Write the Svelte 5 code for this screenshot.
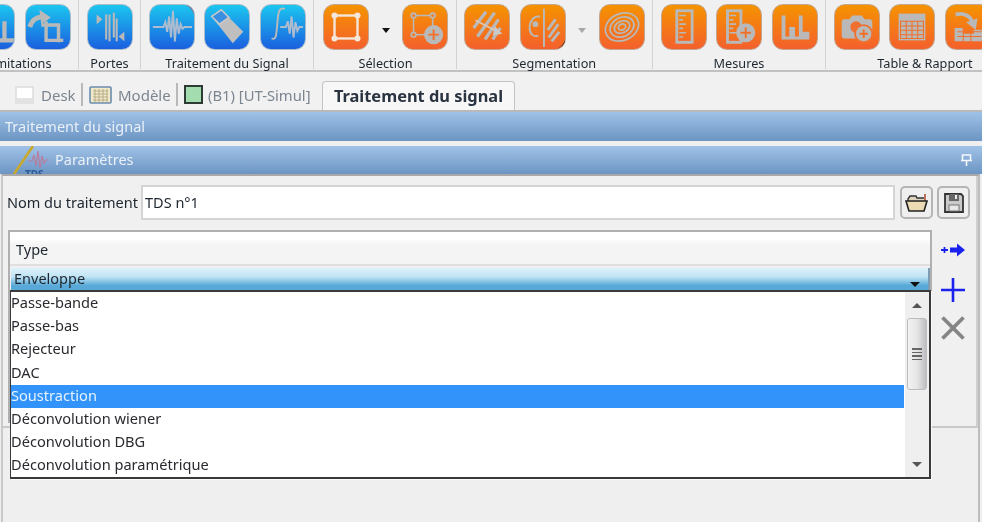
<script>
  const groups = [
    { label: 'Délimitations', cls: 'g-first', items: [['blue', 'limit'], ['blue', 'crop']] },
    { label: 'Portes', items: [['blue', 'gates']] },
    { label: 'Traitement du Signal', items: [['blue', 'wave', 'red'], ['blue', 'eraser'], ['blue', 'integral']] },
    { label: 'Sélection', cls: 'g-sel', items: [['orange', 'rect'], ['arrow', 'black'], ['orange', 'rectadd']] },
    { label: 'Segmentation', items: [['orange', 'hatch'], ['orange', 'split', 'black'], ['arrow', 'grey'], ['orange', 'rings']] },
    { label: 'Mesures', items: [['orange', 'ruler'], ['orange', 'ruleradd'], ['orange', 'bars']] },
    { label: 'Table & Rapport', cls: 'g-last', items: [['orange', 'camera'], ['orange', 'table'], ['orange', 'export']] }
  ];
  const options = ['Passe-bande', 'Passe-bas', 'Rejecteur', 'DAC', 'Soustraction', 'Déconvolution wiener', 'Déconvolution DBG', 'Déconvolution paramétrique'];
</script>

{#snippet plus(x, y, r)}
  <circle cx={x} cy={y} r={r} fill="#b9b9b9" stroke="none" />
  <path d="M{x - r * 0.55} {y}H{x + r * 0.55}M{x} {y - r * 0.55}V{y + r * 0.55}" stroke="#f0702a" stroke-width="2" />
{/snippet}

{#snippet glyph(name)}
  <svg class="glyph" viewBox="0 0 46 46" fill="none" stroke="#b9b9b9" stroke-width="2.5">
    {#if name === 'limit'}
      <path d="M36 17V37M18 37H46" stroke-width="4.5" />
    {:else if name === 'crop'}
      <path d="M16 21H34V39M21 17V37H39" stroke-width="3.6" />
      <path d="M4 23C6 16 11 12.5 18 12.5" stroke-width="5" /><path d="M14 5L26 13L16 20Z" fill="#b9b9b9" stroke="none" />
    {:else if name === 'gates'}
      <path d="M9 10L15 15L9 20Z M38 28L32 33L38 38Z" fill="#b9b9b9" stroke="none" />
      <path d="M19 10V36M22.5 10V38M27 8V34M30 14V38" stroke-width="2.2" />
    {:else if name === 'wave'}
      <path d="M3 23H14L16 18L18 28L20 12L22 34L24 6L26 38L28 14L30 30L32 20L34 25L36 23H44" stroke="#aebccf" stroke-width="2" />
    {:else if name === 'eraser'}
      <path d="M7 12L17 5L40 28L29 40Z" fill="#bfbfbf" stroke="none" />
      <path d="M7 12L17 5L25 13L15 20Z" fill="#3a8fe0" stroke="#c9c9c9" stroke-width="1.6" />
    {:else if name === 'integral'}
      <path d="M25 4C18 2 18 9 17 20C16 31 16 37 11 35" stroke-width="2" />
      <path d="M20 23H26L28 17L30 30L32 12L34 34L36 18L38 27L40 23H44" stroke="#aebccf" stroke-width="2" />
    {:else if name === 'rect'}
      <rect x="11" y="11" width="24" height="24" stroke="#f4e6da" stroke-width="2.5" />
      <g fill="#f4e6da" stroke="none"><circle cx="11" cy="11" r="3.2" /><circle cx="35" cy="11" r="3.2" /><circle cx="11" cy="35" r="3.2" /><circle cx="35" cy="35" r="3.2" /></g>
    {:else if name === 'rectadd'}
      <rect x="11" y="11" width="20" height="20" stroke-width="1.6" />
      <g fill="#f08030" stroke-width="1.6"><circle cx="11" cy="11" r="2.5" /><circle cx="31" cy="11" r="2.5" /><circle cx="11" cy="31" r="2.5" /></g>
      {@render plus(32, 31, 10)}
    {:else if name === 'hatch'}
      <path d="M9 24L22 7M13 33L31 8M21 36L35 15M29 36L37 24" stroke-width="3.4" /><path d="M11 16L34 28" stroke="#dcc6b6" stroke-width="1.8" /><path d="M31 22L39 30L29 32Z" fill="#c9c9c9" stroke="none" />
    {:else if name === 'split'}
      <path d="M20 12C13 11 9 17 9 24C9 30 13 34 18 32" stroke-width="2" /><circle cx="15" cy="20" r="1.8" fill="#b9b9b9" /><path d="M24 4V44" stroke-width="2" />
      <path d="M28 26L36 15M29 34L39 20M32 38L40 28" stroke-width="3" />
    {:else if name === 'rings'}
      <g stroke-width="1.8"><ellipse cx="23" cy="23" rx="18" ry="14" transform="rotate(-25 23 23)" /><ellipse cx="23" cy="23" rx="13" ry="10" transform="rotate(-25 23 23)" /><ellipse cx="23" cy="23" rx="8.5" ry="6" transform="rotate(-25 23 23)" /><ellipse cx="23" cy="23" rx="4" ry="3" transform="rotate(-25 23 23)" /></g>
    {:else if name === 'ruler'}
      <rect x="15.5" y="6" width="16" height="33" stroke-width="3" />
      <path d="M18 11H25M18 15.5H22M18 20H25M18 24.5H22M18 29H25M18 33.5H22" stroke-width="1.7" />
    {:else if name === 'ruleradd'}
      <rect x="11" y="6" width="14" height="33" stroke-width="3" />
      <path d="M13 11H20M13 15.5H17M13 20H20M13 24.5H17M13 29H20" stroke-width="1.7" />
      {@render plus(30, 29, 10)}
    {:else if name === 'bars'}
      <path d="M9 11H13V36H9ZM17 23H23V36H17ZM27 11H31V36H27ZM31 28H38V36H31ZM9 33H38V36H9Z" fill="#b9b9b9" stroke="none" />
    {:else if name === 'camera'}
      <path d="M10 15H15L18 11H28L31 15H36Q39 15 39 18V32Q39 35 36 35H10Q7 35 7 32V18Q7 15 10 15Z" fill="#b9b9b9" stroke="none" />
      <circle cx="22" cy="23" r="6" fill="#f07030" stroke="none" />
      <circle cx="30" cy="30" r="10" fill="#f07030" stroke="none" />{@render plus(30, 30, 8)}
    {:else if name === 'table'}
      <rect x="9" y="9" width="28" height="28" fill="#b9b9b9" stroke="none" />
      <path d="M11 17H35V35H11ZM11 22H35M11 26.5H35M11 31H35M17 17V35M23 17V35M29 17V35" stroke="#f0702a" stroke-width="1.1" />
    {:else if name === 'export'}
      <path d="M9 24V38H40V26H29V30H18V24Z" fill="#b9b9b9" stroke="none" />
      <path d="M12 28H37M12 33H37M18 24V38M26 24V38" stroke="#f0702a" stroke-width="1.1" />
      <path d="M10 10C18 8 25 11 27 17" stroke-width="4" /><path d="M21 18L33 14L31 26Z" fill="#b9b9b9" stroke="none" />
    {/if}
  </svg>
{/snippet}

<div class="app">
  <header class="ribbon">
    {#each groups as g}
      <section class="group {g.cls ?? ''}">
        <div class="icons">
          {#each g.items as it}
            {#if it[0] === 'arrow'}
              <span class="drop {it[1]}"></span>
            {:else}
              <span class="btn {it[0]}">
                {@render glyph(it[1])}
                {#if it[2]}<span class="corner {it[2]}"></span>{/if}
              </span>
            {/if}
          {/each}
        </div>
        <div class="glabel">{g.label}</div>
      </section>
    {/each}
  </header>

  <nav class="tabs">
    <span class="tab t-desk">
      <svg width="19" height="18" viewBox="0 0 19 18"><rect x="1" y="1" width="17" height="12" fill="#fff" stroke="#dcdcdc" stroke-width="1.5" /><rect x="0" y="13" width="19" height="5" fill="#e2e2e2" /></svg>
      Desk
    </span>
    <span class="tab t-model">
      <svg width="23" height="18" viewBox="0 0 23 18"><rect x="1" y="1" width="21" height="16" rx="1" fill="#f2e9c8" stroke="#6a8cae" stroke-width="1.6" /><path d="M4 5H19M4 8H19M4 11H19M4 14H19M6 3V16M10 3V16M14 3V16M18 3V16" stroke="#a9a27e" stroke-width=".8" /></svg>
      Modèle
    </span>
    <span class="tab t-sim">
      <span class="swatch"></span>
      (B1) [UT-Simul]
    </span>
    <span class="active">Traitement du signal</span>
  </nav>

  <div class="bar title">Traitement du signal</div>

  <div class="bar param">
    <svg class="logo" width="36" height="28" viewBox="0 0 36 28">
      <path d="M20 0L1 28" stroke="#c9a92c" stroke-width="2.6" />
      <path d="M15 15H19L21 9L23 20L25 5L27 22L29 10L31 17L33 14H36" stroke="#b77d9f" stroke-width="1.2" fill="none" />
      <text x="12" y="32" class="tds">TDS</text>
    </svg>
    <span>Paramètres</span>
    <svg class="pin" width="11" height="12" viewBox="0 0 11 12"><path d="M1.5 1H9.5V6.5H1.5ZM0 6.5H11M5.5 7V12" stroke="#f4f7fb" stroke-width="1.6" fill="none" /></svg>
  </div>

  <main class="outer">
    <div class="form">
      <div class="name-row">
        <label class="nlabel" for="nom">Nom du traitement</label>
        <input id="nom" class="ninput" value="TDS n°1" />
        <button class="tool" aria-label="Ouvrir">
          <svg width="24" height="20" viewBox="0 0 24 20"><path d="M3 6L5 3H11L12 5H20V9H3Z" fill="#ddd2bd" stroke="#333" stroke-width="1.4" /><path d="M19 1L21 1V8H19Z" fill="#c0705a" /><path d="M1 8H22L19 18H4Z" fill="#ecdab4" stroke="#222" stroke-width="1.6" /></svg>
        </button>
        <button class="tool" aria-label="Enregistrer">
          <svg width="20" height="22" viewBox="0 0 20 22"><path d="M1 2H17L19 4V20H1Z" fill="#c9c9c9" stroke="#333" stroke-width="1.8" /><rect x="5" y="2" width="10" height="7" fill="#666" /><rect x="11" y="3" width="2" height="4" fill="#eee" /><rect x="5" y="13" width="10" height="6" fill="#e8e8e8" stroke="#777" /></svg>
        </button>
      </div>

      <div class="work">
        <div class="grid">
          <div class="ghead">Type</div>
          <div class="gsel">
            <span>Enveloppe</span>
            <i class="caret"></i>
          </div>
          <div class="list">
            <ul>
              {#each options as o}
                <li class:sel={o === 'Soustraction'}>{o}</li>
              {/each}
            </ul>
            <div class="scroll">
              <div class="sbtn"><i class="up"></i></div>
              <div class="thumb"><b></b><b></b><b></b><b></b></div>
              <div class="sfill"></div>
              <div class="sbtn down"><i class="dn"></i></div>
            </div>
          </div>
        </div>
        <div class="actions">
          <svg class="a-next" width="24" height="14" viewBox="0 0 24 14"><path d="M0 7H7M3.5 4V10" stroke="#1a22ee" stroke-width="1.8" /><path d="M9 4.5H16V0.5L24 7L16 13.5V9.5H9Z" fill="#1a22ee" /></svg>
          <svg class="a-add" width="24" height="24" viewBox="0 0 24 24"><path d="M0 12H24M12 0V24" stroke="#1a22ee" stroke-width="2.6" /></svg>
          <svg class="a-del" width="24" height="24" viewBox="0 0 24 24"><path d="M1.5 1.5L22.5 22.5M22.5 1.5L1.5 22.5" stroke="#858585" stroke-width="3.8" /></svg>
        </div>
      </div>
    </div>
  </main>
</div>

<style>
  :global(body) { margin: 0; background: #efefef; }
  .app {
    width: 982px; height: 522px; overflow: hidden; background: #efefef;
    display: flex; flex-direction: column;
    font-family: "Noto Sans", "Open Sans", sans-serif; color: #1e2630;
    filter: blur(0.35px);
  }

  .ribbon { display: flex; height: 70px; flex: none; background: #f0f0f0; border-bottom: 2px solid #c2c2c2; }
  .group { flex: none; box-sizing: border-box; height: 69px; padding: 4px 7.5px 0; border-right: 1px solid #d2d2d2; display: flex; flex-direction: column; align-items: center; }
  .g-first { margin-left: -38.5px; }
  .g-sel { padding-left: 9px; }
  .g-last { border-right: 0; }
  .icons { display: flex; gap: 9.5px; align-items: flex-start; height: 46px; }
  .glabel { font-size: 12.7px; line-height: 17px; margin-top: 5px; white-space: nowrap; }
  .g-first .glabel { align-self: flex-end; margin-right: 19px; }
  .g-last .glabel { margin-left: 26px; }
  .btn { position: relative; display: block; flex: none; width: 46px; height: 46px; border-radius: 11px; overflow: hidden; box-sizing: border-box; border: 1px solid #b9b3ab; }
  .blue { background: linear-gradient(#1bc6ef, #1b5fdf); border-color: #a9bccb; }
  .orange { background: linear-gradient(#f59300, #f4602d); border-color: #c4a68f; }
  .glyph { display: block; width: 44px; height: 44px; }
  .corner { position: absolute; right: -1px; top: -1px; width: 14px; height: 14px; background: #e5202e; clip-path: path("M0 0H14V14A14 14 0 0 0 0 0Z"); }
  .corner.black { top: auto; bottom: -1px; background: #111; clip-path: path("M14 0V14H0A14 14 0 0 0 14 0Z"); }
  .drop { flex: none; width: 14px; height: 30px; position: relative; }
  .drop::after { content: ""; position: absolute; left: 3px; top: 24px; border: 4px solid transparent; border-top: 5px solid #111; border-bottom: 0; }
  .drop.grey::after { border-top-color: #a8a8a8; }

  .tabs { height: 38px; flex: none; display: flex; align-items: flex-end; box-sizing: content-box; border-bottom: 2px solid #b9b9b9; background: #f1f1f1; font-size: 15px; color: #7b8590; }
  .tab { display: flex; align-items: center; height: 23px; margin-bottom: 4px; gap: 7px; box-sizing: border-box; white-space: nowrap; }
  .t-desk { padding-left: 15px; width: 83px; border-right: 2px solid #b8b8b8; }
  .t-model { padding-left: 6px; width: 95px; gap: 6px; border-right: 2px solid #b8b8b8; }
  .t-sim { padding-left: 6px; width: 144px; gap: 5px; font-size: 14.8px; }
  .swatch { width: 15px; height: 15px; background: #a3dcae; border: 2px solid #2e3a34; }
  .active { height: 29px; box-sizing: border-box; width: 193px; padding-bottom: 2px; display: flex; align-items: center; justify-content: center; background: #f7f7f7; border: 1px solid #c3c3c3; border-bottom: 0; border-radius: 4px 4px 0 0; font-weight: 700; font-size: 16.4px; color: #2a3340; white-space: nowrap; }

  .bar { flex: none; box-sizing: border-box; background: linear-gradient(#a0c2e7, #6c95c3); color: #e9f0f8; font-size: 14.5px; display: flex; align-items: center; padding-bottom: 2px; }
  .title { height: 29px; padding-left: 5px; }
  .param { height: 28px; margin-top: 5px; padding-left: 13px; padding-bottom: 0; gap: 6px; position: relative; overflow: hidden; }
  .param span { margin-bottom: 2px; }
  .logo { flex: none; }
  .tds { font-size: 10px; font-weight: 700; fill: #2d5a98; font-family: "Noto Sans", sans-serif; }
  .pin { margin-left: auto; margin-right: 10px; }

  .outer { flex: 1; box-sizing: border-box; margin-left: 1px; margin-right: 2px; border-left: 2px solid #c9c9c9; border-right: 2px solid #bdbdbd; border-top: 2px solid #a9a9a9; }
  .form { height: 252px; box-sizing: border-box; border-bottom: 2px solid #c9c9c9; border-right: 2px solid #cfcfcf; padding: 9px 0 0 4px; background: #f0f0f0; }

  .name-row { display: flex; align-items: center; height: 35px; font-size: 14.5px; }
  .nlabel { width: 134px; flex: none; margin-bottom: 2px; }
  .ninput { width: 754px; height: 35px; box-sizing: border-box; flex: none; border: 2px solid #d4d4d4; background: #fff; font: inherit; color: inherit; padding: 0 2px 2px; outline: 0; }
  .tool { flex: none; width: 33px; height: 33px; margin-left: 5px; padding: 0; border: 2px solid #b5b5b5; border-radius: 5px; background: #efefef; display: flex; align-items: center; justify-content: center; }
  .tool + .tool { margin-left: 4px; }

  .work { display: flex; margin-top: 10px; }
  .grid { position: relative; flex: none; width: 924px; height: 193px; margin-left: 1px; box-sizing: border-box; border: 2px solid #b0b0b0; border-bottom: 0; background: #f0f0f0; }
  .ghead { height: 34px; box-sizing: border-box; padding: 7px 0 0 6px; font-size: 14.5px; line-height: 20px; background: linear-gradient(#fff 20%, #f4f4f4 40%); border-bottom: 2px solid #e0e0e0; }
  .gsel { height: 22px; margin: 2px 0 0 1px; padding: 0 0 2px 3px; box-sizing: border-box; display: flex; align-items: center; justify-content: space-between; font-size: 14.5px; background: linear-gradient(#dff2fb, #bfe3f3 40%, #58a9d8 80%); border-right: 2px solid #7e9db4; }
  .caret { margin-right: 8px; margin-top: 12px; border: 5px solid transparent; border-top: 5px solid #111; border-bottom: 0; }

  .list { position: absolute; left: 0; top: 58px; width: 921px; height: 189px; box-sizing: border-box; display: flex; background: #fff; border: 2px solid #3a3a3a; border-left-width: 1.5px; box-shadow: 1px 1px 0 #fafafa; }
  ul { list-style: none; margin: 0; padding: 0; flex: 1; }
  li { height: 23.2px; line-height: 20px; font-size: 14.6px; white-space: nowrap; color: #2a2a30; }
  li.sel { background: #3294fb; color: #e6f2ff; }
  .scroll { width: 24px; flex: none; display: flex; flex-direction: column; background: #efefef; margin-left: 1px; }
  .sbtn { height: 26px; flex: none; display: flex; align-items: center; justify-content: center; }
  .up { border: 5px solid transparent; border-bottom: 5px solid #555; border-top: 0; }
  .dn { border: 5px solid transparent; border-top: 5px solid #555; border-bottom: 0; }
  .thumb { height: 72px; margin: 0 2px; box-sizing: border-box; border: 1px solid #bdbdbd; border-radius: 3px; background: linear-gradient(90deg, #f2f2f2, #e6e6e6 50%, #bdbdc2); display: flex; flex-direction: column; align-items: center; justify-content: center; gap: 2px; }
  .thumb b { width: 10px; height: 1.5px; background: #666; }
  .sfill { flex: 1; }

  .actions { flex: none; width: 38px; display: flex; flex-direction: column; align-items: center; padding-top: 13px; box-sizing: border-box; margin-left: 2px; }
  .a-add { margin-top: 21px; }
  .a-del { margin-top: 14px; }
</style>
